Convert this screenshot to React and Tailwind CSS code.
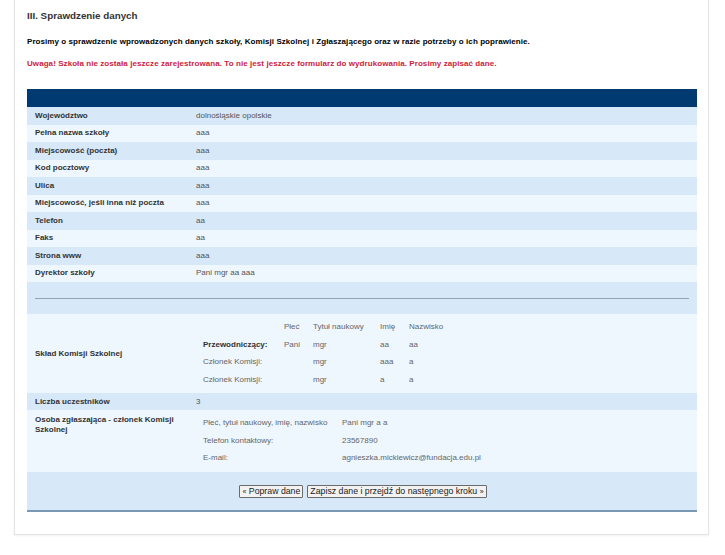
import React from "react";

const rows = [
  ["Województwo", "dolnośląskie opolskie"],
  ["Pełna nazwa szkoły", "aaa"],
  ["Miejscowość (poczta)", "aaa"],
  ["Kod pocztowy", "aaa"],
  ["Ulica", "aaa"],
  ["Miejscowość, jeśli inna niż poczta", "aaa"],
  ["Telefon", "aa"],
  ["Faks", "aa"],
  ["Strona www", "aaa"],
  ["Dyrektor szkoły", "Pani mgr aa aaa"],
];

const komisja = [
  { role: "Przewodniczący:", bold: true, plec: "Pani", tytul: "mgr", imie: "aa", nazw: "aa" },
  { role: "Członek Komisji:", plec: "", tytul: "mgr", imie: "aaa", nazw: "a" },
  { role: "Członek Komisji:", plec: "", tytul: "mgr", imie: "a", nazw: "a" },
];

export default function App() {
  return (
    <div
      className="w-[725px] h-[555px] bg-white overflow-hidden"
      style={{ fontFamily: '"Liberation Sans", Arial, sans-serif' }}
    >
      <div className="ml-[14px] w-[695px] -mt-[10px] pt-[10px] border border-[#e4e4e4] shadow-[0_1px_2px_rgba(0,0,0,0.06)] px-[12px] pb-[22px]">
        <h1 className="text-[9.8px] font-bold text-[#333] pt-[9px] leading-[12px]">
          III. Sprawdzenie danych
        </h1>
        <p className="mt-[15px] text-[8px] font-bold text-black leading-[10px] tracking-[0.07px]">
          Prosimy o sprawdzenie wprowadzonych danych szkoły, Komisji Szkolnej i Zgłaszającego oraz w razie potrzeby o ich poprawienie.
        </p>
        <p className="mt-[12px] text-[8px] font-bold text-[#d0213c] leading-[10px] tracking-[0.07px]">
          Uwaga! Szkoła nie została jeszcze zarejestrowana. To nie jest jeszcze formularz do wydrukowania. Prosimy zapisać dane.
        </p>

        <div className="mt-[20px] w-[670px] border-b-2 border-[#7898b4]">
          <div className="h-[18px] bg-[#003a70]" />
          {rows.map(([label, value], i) => (
            <div
              key={label}
              className={`grid grid-cols-[169px_1fr] items-center h-[17.5px] text-[8px] ${
                i % 2 === 0 ? "bg-[#d7e8f9]" : "bg-[#eef6fe]"
              }`}
            >
              <div className="pl-[8px] font-bold text-[#333]">{label}</div>
              <div className="text-[#555]">{value}</div>
            </div>
          ))}

          <div className="h-[32px] bg-[#d7e8f9] flex items-center px-[8px]">
            <div className="h-px w-full bg-[#8fa3b5]" />
          </div>

          <div className="grid grid-cols-[176px_1fr] items-center h-[79px] bg-[#eef6fe] text-[8px]">
            <div className="pl-[8px] font-bold text-[#333]">Skład Komisji Szkolnej</div>
            <div className="grid grid-cols-[81px_29px_67px_29px_1fr] text-[#666]">
              <div className="h-[17.6px] flex items-center"></div>
              <div className="h-[17.6px] flex items-center">Płeć</div>
              <div className="h-[17.6px] flex items-center">Tytuł naukowy</div>
              <div className="h-[17.6px] flex items-center">Imię</div>
              <div className="h-[17.6px] flex items-center">Nazwisko</div>
              {komisja.map((k, i) => (
                <React.Fragment key={i}>
                  <div className={`h-[17.6px] flex items-center ${k.bold ? "font-bold text-[#333]" : ""}`}>
                    {k.role}
                  </div>
                  <div className="h-[17.6px] flex items-center">{k.plec}</div>
                  <div className="h-[17.6px] flex items-center">{k.tytul}</div>
                  <div className="h-[17.6px] flex items-center">{k.imie}</div>
                  <div className="h-[17.6px] flex items-center">{k.nazw}</div>
                </React.Fragment>
              ))}
            </div>
          </div>

          <div className="grid grid-cols-[169px_1fr] items-center h-[17px] bg-[#d7e8f9] text-[8px]">
            <div className="pl-[8px] font-bold text-[#333]">Liczba uczestników</div>
            <div className="text-[#555]">3</div>
          </div>

          <div className="grid grid-cols-[176px_1fr] h-[62px] bg-[#eef6fe] text-[8px]">
            <div className="pl-[8px] pt-[5px] font-bold text-[#333] leading-[10px] w-[150px]">
              Osoba zgłaszająca - członek Komisji Szkolnej
            </div>
            <div className="grid grid-cols-[139px_1fr] grid-rows-[17.5px_17.5px_17.5px] pt-[4.5px] text-[#666]">
              <div className="flex items-center">Płeć, tytuł naukowy, imię, nazwisko</div>
              <div className="flex items-center">Pani mgr a a</div>
              <div className="flex items-center">Telefon kontaktowy:</div>
              <div className="flex items-center">23567890</div>
              <div className="flex items-center">E-mail:</div>
              <div className="flex items-center">agnieszka.mickiewicz@fundacja.edu.pl</div>
            </div>
          </div>

          <div className="h-[38px] bg-[#d7e8f9] flex items-center justify-center gap-[4px] pl-[2px]">
            <button className="h-[13px] px-[2px] border border-[#6b6b6b] bg-[#f2f2f2] text-[8.75px] leading-[11px] text-[#222] rounded-[1px]">
              <span className="text-[7px]">«</span> Popraw dane
            </button>
            <button className="h-[13px] px-[2px] border border-[#6b6b6b] bg-[#f2f2f2] text-[8.75px] leading-[11px] text-[#222] rounded-[1px]">
              Zapisz dane i przejdź do następnego kroku <span className="text-[7px]">»</span>
            </button>
          </div>
        </div>
      </div>
    </div>
  );
}
